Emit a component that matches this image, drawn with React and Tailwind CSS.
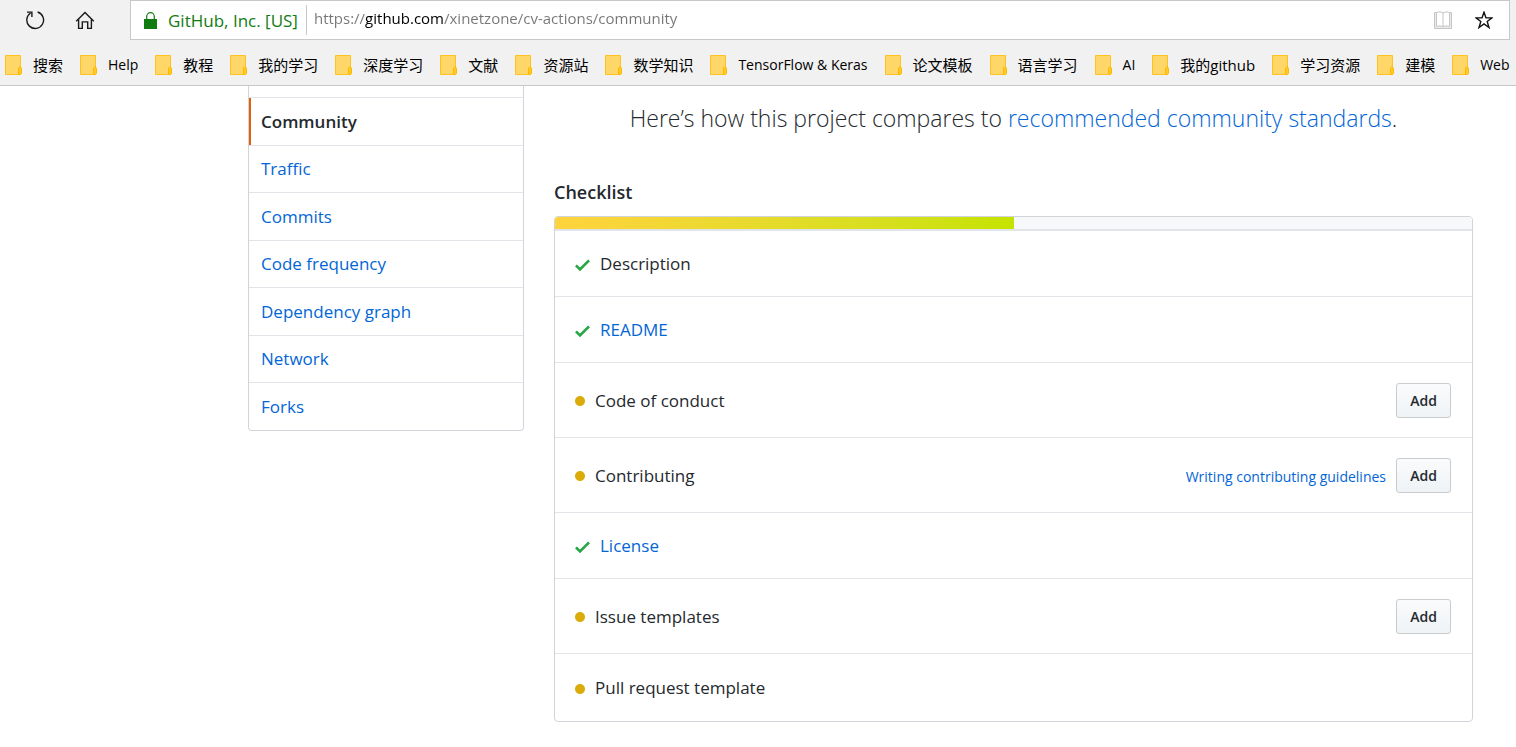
import React from "react";

const bookmarks = [
  "搜索", "Help", "教程", "我的学习", "深度学习", "文献", "资源站", "数学知识",
  "TensorFlow & Keras", "论文模板", "语言学习", "AI", "我的github", "学习资源", "建模", "Web",
];

const navItems = ["Community", "Traffic", "Commits", "Code frequency", "Dependency graph", "Network", "Forks"];

const checklist = [
  { label: "Description", done: true },
  { label: "README", done: true, link: true },
  { label: "Code of conduct", add: true },
  { label: "Contributing", add: true, help: "Writing contributing guidelines" },
  { label: "License", done: true, link: true },
  { label: "Issue templates", add: true },
  { label: "Pull request template" },
];

function isLatin(name) {
  return /^[\x20-\x7e]+$/.test(name);
}

function ReloadIcon() {
  return (
    <svg width="20" height="20" viewBox="0 0 20 20" fill="none" stroke="#1a1a1a" strokeWidth="1.4" aria-hidden="true">
      <path d="M12.6 2A8.4 8.4 0 1 1 5.6 3" />
      <path d="M2 2.1h4.9V7" />
    </svg>
  );
}

function HomeIcon() {
  return (
    <svg width="20" height="20" viewBox="0 0 20 20" fill="none" stroke="#1a1a1a" strokeWidth="1.4" aria-hidden="true">
      <path d="M1.2 11.2 10 2.4l8.8 8.8" />
      <path d="M3.6 9.2v9.2h3.7v-6.5h5.4v6.5h3.7V9.2" />
    </svg>
  );
}

function LockIcon() {
  return (
    <svg className="shrink-0" width="13" height="17" viewBox="0 0 13 17" aria-hidden="true">
      <path d="M0 7h13v10H0z" fill="#107c10" />
      <path d="M2.7 7V4.5a3.8 3.8 0 0 1 7.6 0V7" fill="none" stroke="#107c10" strokeWidth="1.2" />
    </svg>
  );
}

function BookIcon() {
  return (
    <svg width="18" height="18" viewBox="0 0 18 18" fill="none" stroke="#c4c4c4" aria-hidden="true">
      <path d="M2.5 1.5H.5v16h17v-16h-2" fill="#ececec" />
      <path d="M9 2C8 .7 4.500.7 2.500 1.500v14c2-.8 5.500-.8 6.500.5 1-1.300 4.500-1.300 6.500-.5v-14C13.500.7 10 .7 9 2zM9 2v14" fill="#fff" />
    </svg>
  );
}

function StarIcon() {
  return (
    <svg width="18" height="18" viewBox="0 0 18 18" fill="none" stroke="#111" strokeWidth="1.4" aria-hidden="true">
      <path d="M9 1.2l2 5.700h6l-4.800 3.600 1.800 6L9 12.900l-5 3.600 1.800-6L1 6.900h6z" />
    </svg>
  );
}

function FolderIcon() {
  return (
    <svg className="shrink-0" width="17" height="20" viewBox="0 0 17 20" aria-hidden="true">
      <path d="M.5.5h15v19H.5z" fill="#ffd768" stroke="#ffc220" />
      <path d="M13.500 19.500v-6.500l1.200-1 1.800 1v5.500l-1 1z" fill="#ffca28" stroke="#ffb900" />
    </svg>
  );
}

function CheckIcon() {
  return (
    <svg className="mt-px shrink-0" width="15" height="20" viewBox="0 0 12 16" fill="#28a745" aria-hidden="true">
      <path d="M12 5l-8 8-4-4 1.500-1.500L4 10l6.500-6.500L12 5z" />
    </svg>
  );
}

function DotIcon() {
  return (
    <svg className="mt-px shrink-0" width="10" height="20" viewBox="0 0 8 16" fill="#dbab09" aria-hidden="true">
      <path d="M0 8c0-2.200 1.800-4 4-4s4 1.800 4 4-1.800 4-4 4-4-1.800-4-4z" />
    </svg>
  );
}

function BrowserChrome() {
  return (
    <header className="border-b border-[#c8c8c8] bg-[#f1f1f1]">
      <div className="flex h-10 pr-[6px]">
        <div className="flex w-[130px] shrink-0 items-center gap-[30px] pl-[25px]">
          <button type="button" aria-label="Refresh"><ReloadIcon /></button>
          <button type="button" aria-label="Home"><HomeIcon /></button>
        </div>
        <div className="flex min-w-0 flex-1 items-center border border-[#c8c8c8] bg-white pl-[13px] pr-4">
          <LockIcon />
          <span className="ml-[11px] whitespace-nowrap pt-0.5 text-[17px] leading-6 text-[#107c10]">GitHub, Inc. [US]</span>
          <span className="ml-2 h-[30px] w-px bg-[#c8c8c8]" />
          <input
            type="text"
            aria-label="Address"
            defaultValue="https://github.com/xinetzone/cv-actions/community"
            className="ml-[7px] mr-4 min-w-0 flex-1 bg-[linear-gradient(to_right,#767676_51px,#000_51px,#000_130px,#767676_130px)] bg-clip-text pb-1 text-[15px] leading-6 text-transparent caret-black outline-none"
          />
          <div className="flex items-center gap-[23px]">
            <button type="button" aria-label="Reading view"><BookIcon /></button>
            <button type="button" aria-label="Add to favorites"><StarIcon /></button>
          </div>
        </div>
      </div>
      <nav aria-label="Favorites" className="flex h-[45px] items-center gap-[17px] overflow-hidden pl-[5px] pt-[5px]">
        {bookmarks.map((name) => (
          <a
            key={name}
            href="#"
            className={
              isLatin(name)
                ? "flex shrink-0 items-center gap-[11px] whitespace-nowrap text-sm leading-5 text-black"
                : "flex shrink-0 items-center gap-[11px] whitespace-nowrap text-[15px] leading-5 text-black"
            }
          >
            <FolderIcon />
            {name}
          </a>
        ))}
      </nav>
    </header>
  );
}

function Sidebar() {
  return (
    <nav aria-label="Insights" className="w-[276px] shrink-0 self-start rounded-b-[4px] border border-t-0 border-[#d1d5da]">
      <div className="h-3 border-b border-[#e1e4e8]" />
      <ul>
        {navItems.map((name, i) => (
          <li key={name} className="h-12 border-b border-[#e1e4e8] last:h-[47px] last:border-b-0 even:h-[47px]">
            <a
              href="#"
              aria-current={i === 0 ? "page" : undefined}
              className={
                i === 0
                  ? "flex h-full items-center border-l-2 border-[#e36209] pl-[10px] text-[17px] font-semibold text-[#24292e]"
                  : "flex h-full items-center pl-3 text-[17px] text-[#0366d6]"
              }
            >
              {name}
            </a>
          </li>
        ))}
      </ul>
    </nav>
  );
}

function ChecklistRow({ item }) {
  return (
    <li className="flex items-center border-b border-[#e1e4e8] pb-[19px] pl-5 pr-[21px] pt-5 last:border-b-0 last:pb-5 last:pt-[21px]">
      <div className="flex flex-1 items-center gap-[10px] text-[17px] leading-[26px]">
        {item.done ? <CheckIcon /> : <DotIcon />}
        {item.link ? <a href="#" className="text-[#0366d6]">{item.label}</a> : <span>{item.label}</span>}
      </div>
      {item.help && <a href="#" className="mr-[10px] pt-0.5 text-sm text-[#0366d6]">{item.help}</a>}
      {item.add && (
        <button
          type="button"
          aria-label={`Add ${item.label}`}
          className="h-[35px] w-[55px] rounded-[3px] border border-[#c9cccf] bg-linear-to-b from-[#fafbfc] to-[#eff3f6] text-sm font-semibold text-[#24292e]"
        >
          Add
        </button>
      )}
    </li>
  );
}

export default function App() {
  return (
    <div className="min-h-screen bg-white font-['Open_Sans','Noto_Sans_CJK_SC',sans-serif] text-[#24292e]" lang="zh-CN">
      <BrowserChrome />
      <div className="flex gap-[30px] pb-6 pl-[248px] pr-[43px]">
        <Sidebar />
        <main className="min-w-0 flex-1">
          <p className="pt-3 text-center text-[23px] font-light leading-10">
            Here’s how this project compares to <a href="#" className="text-[#0366d6]">recommended community standards</a>.
          </p>
          <h1 className="mt-[42px] text-lg font-semibold leading-6">Checklist</h1>
          <section className="mt-3 overflow-hidden rounded-[4px] border border-[#d1d5da]">
            <div className="border-b-2 border-[#e1e4e8] bg-[#f6f8fa]">
              <div className="h-3 w-1/2 bg-linear-to-r from-[#ffd33d] to-[#c5e300]" />
            </div>
            <ul>
              {checklist.map((item) => (
                <ChecklistRow key={item.label} item={item} />
              ))}
            </ul>
          </section>
        </main>
      </div>
    </div>
  );
}
